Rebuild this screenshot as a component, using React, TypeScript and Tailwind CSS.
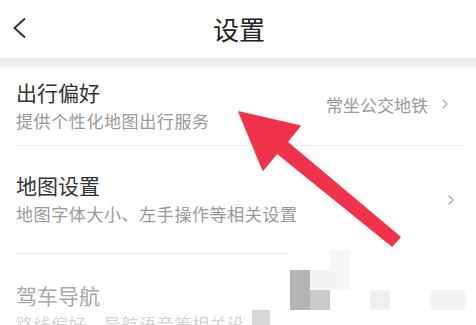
import { ChevronRight } from "lucide-react";

const FONT = { fontFamily: '"Noto Sans CJK SC", "Noto Sans", sans-serif' };

type Row = { title: string; desc: string; value?: string; chevron?: boolean };

const ROWS: Row[] = [
  { title: "出行偏好", desc: "提供个性化地图出行服务", value: "常坐公交地铁", chevron: true },
  { title: "地图设置", desc: "地图字体大小、左手操作等相关设置", chevron: true },
];

export default function App() {
  return (
    <div className="relative w-[476px] h-[325px] overflow-hidden bg-white" style={FONT}>
      {/* header */}
      <div className="relative h-[58px] flex items-center justify-center">
        <svg className="absolute left-[12px] top-[17px]" width="16" height="22" viewBox="0 0 16 22">
          <polyline points="13,1.5 2.5,11 13,20.5" fill="none" stroke="#333" strokeWidth="2" strokeLinejoin="miter" />
        </svg>
        <span className="text-[26px] leading-[38px] text-[#222] ml-[2px]">设置</span>
      </div>
      <div className="h-[9px] bg-gradient-to-b from-[#e8e8e8] to-[#f3f3f3]" />

      {/* row 1 */}
      <div className="ml-[16px] mr-[13px] h-[79px] border-b border-[#eeeeee] flex items-center">
        <div className="flex-1 flex flex-col pb-[3px]">
          <span className="text-[21px] leading-[31px] text-[#333]">{ROWS[0].title}</span>
          <span className="text-[17px] leading-[25px] tracking-[0.6px] text-[#999]">{ROWS[0].desc}</span>
        </div>
        <div className="flex items-center gap-[9px] mb-[4px]">
          <span className="text-[17px] leading-[25px] text-[#999]">{ROWS[0].value}</span>
          <ChevronRight className="w-[16px] h-[16px] text-[#aaa] mr-[10px]" strokeWidth={2} />
        </div>
      </div>

      {/* row 2 */}
      <div className="ml-[16px] h-[107px] flex items-center">
        <div className="flex-1 flex flex-col pb-[4px]">
          <span className="text-[21px] leading-[31px] text-[#333]">{ROWS[1].title}</span>
          <span className="text-[17px] leading-[25px] tracking-[0.6px] text-[#999]">{ROWS[1].desc}</span>
        </div>
        <ChevronRight className="w-[16px] h-[16px] text-[#aaa] mr-[17px]" strokeWidth={2} />
      </div>
      <div className="ml-[16px] w-[274px] h-px bg-[#eeeeee]" />

      {/* row 3 (faded) */}
      <div className="ml-[16px] pt-[26px] flex flex-col">
        <span className="text-[21px] leading-[31px] text-[#a8a8a8]">驾车导航</span>
        <span className="text-[17px] leading-[25px] tracking-[0.6px] text-[#d4d4d4] blur-[0.6px]">路线偏好、导航语音等相关设</span>
      </div>

      {/* mosaic blocks */}
      <div className="absolute left-[252px] top-[310px] w-[18px] h-[15px] bg-[#d8d8d8]" />
      <div className="absolute left-[290px] top-[270px] w-[20px] h-[40px] bg-[#b4b4b4]" />
      <div className="absolute left-[310px] top-[290px] w-[20px] h-[20px] bg-[#cacaca]" />
      <div className="absolute left-[310px] top-[270px] w-[20px] h-[20px] bg-[#f4f4f4]" />
      <div className="absolute left-[330px] top-[250px] w-[20px] h-[40px] bg-[#f6f6f6]" />
      <div className="absolute left-[370px] top-[290px] w-[20px] h-[20px] bg-[#f2f2f2]" />
      <div className="absolute left-[430px] top-[290px] w-[36px] h-[20px] bg-[#f4f4f4]" />

      {/* red arrow */}
      <svg className="absolute left-0 top-0" width="476" height="325" viewBox="0 0 476 325">
        <polygon
          points="239,112 300,126 287,142 400,237 392,246 277,153 263,170"
          fill="#f0334b"
          stroke="#f0334b"
          strokeWidth="1.5"
          strokeLinejoin="round"
        />
      </svg>
    </div>
  );
}
